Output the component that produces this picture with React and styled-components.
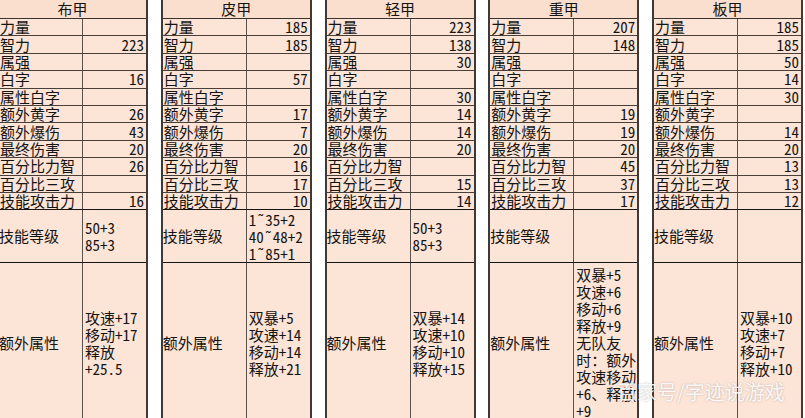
import React from 'react';
import styled, { createGlobalStyle } from 'styled-components';

const GlobalStyle = createGlobalStyle`
  html, body { margin: 0; padding: 0; background: #ffffff; }
  body { font-family: "Noto Sans Mono CJK SC", "Noto Sans CJK SC", "DejaVu Sans Mono", monospace; }
`;

const Page = styled.div`
  position: relative;
  width: 805px;
  height: 418px;
  overflow: hidden;
  background: #ffffff;
`;

const Sheet = styled.div`
  display: flex;
  align-items: flex-start;
  gap: 12.75px;
  margin-left: -3px;
`;

const Table = styled.section`
  flex: 0 0 151px;
  box-sizing: border-box;
  display: flex;
  flex-direction: column;
  border-left: 2px solid #403a36;
  border-right: 2px solid #403a36;
  background: #fce4d6;
  color: #141414;
  font-size: 15px;
`;

const Header = styled.div`
  height: 19px;
  box-sizing: border-box;
  border-bottom: 1px solid #3a322d;
  background: #fadfce;
  text-align: center;
  line-height: 18px;
`;

const Row = styled.div`
  display: grid;
  grid-template-columns: 83px 1fr;
  height: ${(p) => p.$h}px;
  box-sizing: border-box;
  border-bottom: 1px solid ${(p) => (p.$strong ? '#151515' : '#4a3f38')};
`;

const Label = styled.div`
  display: flex;
  align-items: center;
  padding-left: ${(p) => (p.$big ? 0 : 1)}px;
  white-space: nowrap;
  line-height: 16px;
`;

const Value = styled.div`
  display: flex;
  flex-direction: column;
  justify-content: center;
  align-items: ${(p) => (p.$multi ? 'flex-start' : 'flex-end')};
  padding: ${(p) => (p.$multi ? '0 0 0 2px' : '0 2px 0 0')};
  border-left: 1px solid #5a524c;
  line-height: ${(p) => (p.$multi ? 17 : 16)}px;
  white-space: nowrap;
  overflow: hidden;
`;

const Line = styled.span`
  display: block;
`;

const Watermark = styled.div`
  position: absolute;
  left: 617px;
  top: 380px;
  font-family: "Noto Sans CJK SC", sans-serif;
  font-size: 20px;
  line-height: 24px;
  color: rgba(255, 255, 255, 0.9);
  text-shadow: 0 0 2px rgba(0, 0, 0, 0.25);
  white-space: nowrap;
`;

const LABELS = ['力量', '智力', '属强', '白字', '属性白字', '额外黄字', '额外爆伤', '最终伤害', '百分比力智', '百分比三攻', '技能攻击力'];

const TABLES = [
  {
    name: '布甲',
    stats: ['', '223', '', '16', '', '26', '43', '20', '26', '', '16'],
    skill: ['50+3', '85+3'],
    extra: ['攻速+17', '移动+17', '释放', '+25.5'],
  },
  {
    name: '皮甲',
    stats: ['185', '185', '', '57', '', '17', '7', '20', '16', '17', '10'],
    skill: ['1˜35+2', '40˜48+2', '1˜85+1'],
    extra: ['双暴+5', '攻速+14', '移动+14', '释放+21'],
  },
  {
    name: '轻甲',
    stats: ['223', '138', '30', '', '30', '14', '14', '20', '', '15', '14'],
    skill: ['50+3', '85+3'],
    extra: ['双暴+14', '攻速+10', '移动+10', '释放+15'],
  },
  {
    name: '重甲',
    stats: ['207', '148', '', '', '', '19', '19', '20', '45', '37', '17'],
    skill: [],
    extra: ['双暴+5', '攻速+6', '移动+6', '释放+9', '无队友', '时：额外', '攻速移动', '+6、释放', '+9'],
  },
  {
    name: '板甲',
    stats: ['185', '185', '50', '14', '30', '', '14', '20', '13', '13', '12'],
    skill: [],
    extra: ['双暴+10', '攻速+7', '移动+7', '释放+10'],
  },
];

function ArmorTable({ data }) {
  return (
    <Table>
      <Header>{data.name}</Header>
      {LABELS.map((label, i) => (
        <Row key={label} $h={17.4} $strong={i === LABELS.length - 1}>
          <Label>{label}</Label>
          <Value>{data.stats[i]}</Value>
        </Row>
      ))}
      <Row $h={53} $strong>
        <Label $big>技能等级</Label>
        <Value $multi>
          {data.skill.map((s) => (
            <Line key={s}>{s}</Line>
          ))}
        </Value>
      </Row>
      <Row $h={160}>
        <Label $big>额外属性</Label>
        <Value $multi>
          {data.extra.map((s, i) => (
            <Line key={i}>{s}</Line>
          ))}
        </Value>
      </Row>
    </Table>
  );
}

export default function App() {
  return (
    <Page>
      <GlobalStyle />
      <Sheet>
        {TABLES.map((t) => (
          <ArmorTable key={t.name} data={t} />
        ))}
      </Sheet>
      <Watermark>百家号/字迹说游戏</Watermark>
    </Page>
  );
}
